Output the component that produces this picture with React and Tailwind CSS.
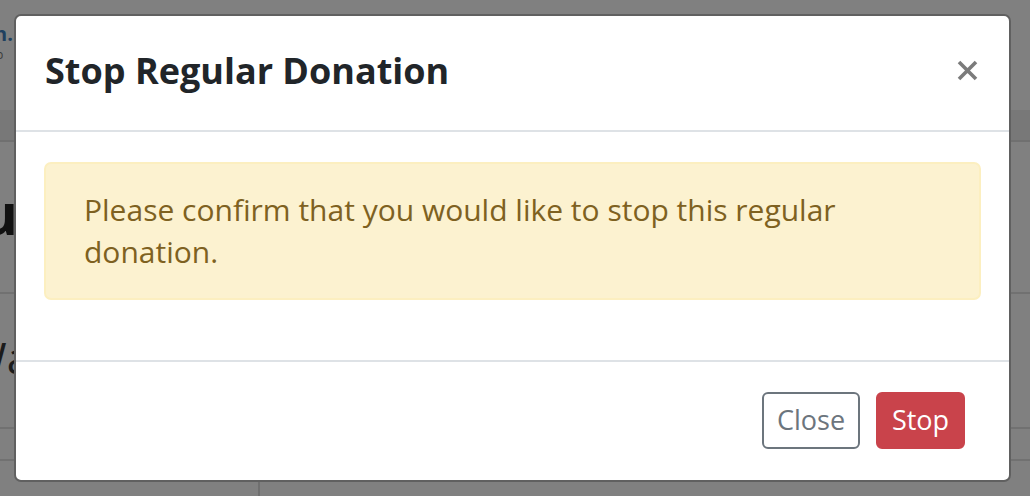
import React from "react";

const font = { fontFamily: '"Open Sans", "Liberation Sans", sans-serif' };

function PageBehind() {
  return (
    <div className="flex h-full w-full flex-col bg-[#808080]">
      <div className="h-[110px] pt-[22px]">
        <div className="ml-[-6px] text-[20px] font-bold leading-[24px] text-[#20405f]">n.</div>
        <div className="ml-[-4px] mt-[2px] text-[12px] leading-[14px] text-[#3a3a3a]">p</div>
      </div>
      <div className="h-[32px] border-b-2 border-[#707070] bg-[#787878]" />
      <div className="flex h-[152px] items-center border-b-2 border-[#717171]">
        <div className="ml-[-20px] mt-[-8px] text-[58px] font-bold leading-none text-[#111]">u</div>
      </div>
      <div className="flex h-[135px] items-center border-b-2 border-[#717171]">
        <div className="ml-[-34px] mt-[-8px] text-[44px] leading-none text-[#1b1b1b]">Wa</div>
      </div>
      <div className="h-[32px] border-b-2 border-[#717171]" />
      <div className="flex flex-1">
        <div className="w-[260px] border-r-2 border-[#6f6f6f]" />
      </div>
    </div>
  );
}

export default function App() {
  return (
    <div className="relative h-[496px] w-[1030px] overflow-hidden" style={font}>
      <PageBehind />
      <div className="absolute left-[14px] top-[14px] flex h-[468px] w-[997px] flex-col overflow-hidden rounded-[7px] border-2 border-[#606060] bg-white">
        <div className="flex h-[116px] items-center justify-between border-b-2 border-[#dee2e6] pl-[29px] pr-[30px]">
          <h5 className="mt-[-4px] text-[36px] font-bold leading-[52px] text-[#212529]">Stop Regular Donation</h5>
          <button className="mt-[-6px] flex h-[24px] w-[24px] items-center justify-center text-[#7b7b7b]">
            <svg width="21" height="21" viewBox="0 0 21 21" fill="none" stroke="currentColor" strokeWidth="3.6">
              <path d="M2 2 L19 19 M19 2 L2 19" />
            </svg>
          </button>
        </div>
        <div className="h-[228px] px-[28px] pt-[30px]">
          <div className="rounded-[7px] border-2 border-[#fcefc0] bg-[#fcf2d0] px-[38px] pb-[25px] pt-[25px] text-[30px] leading-[42px] text-[#7e6121]">
            Please confirm that you would like to stop this regular donation.
          </div>
        </div>
        <div className="flex flex-1 items-center justify-end gap-[16px] border-t-2 border-[#dee2e6] pb-[2px] pr-[44px]">
          <button className="h-[57px] w-[98px] rounded-[6px] border-2 border-[#6c757d] text-[27px] leading-[38px] text-[#6c757d]">
            Close
          </button>
          <button className="h-[57px] w-[89px] rounded-[6px] border-2 border-[#c9434b] bg-[#c9434b] text-[27px] leading-[38px] text-white">
            Stop
          </button>
        </div>
      </div>
    </div>
  );
}
